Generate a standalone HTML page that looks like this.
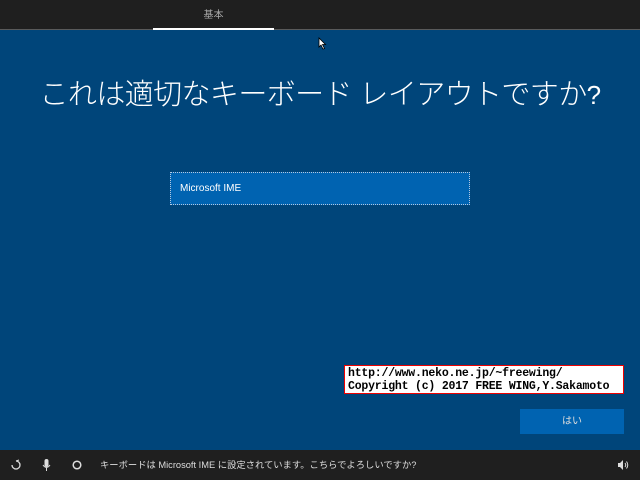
<!DOCTYPE html>
<html><head><meta charset="utf-8"><style>
body{margin:0;width:640px;height:480px;background:#00457a;position:relative;overflow:hidden;font-family:"Liberation Sans","Noto Sans CJK JP",sans-serif;color:#fff}
.top{position:absolute;left:0;top:0;width:640px;height:29px;background:#1f1f1f;border-bottom:1px solid #5a5a5a}
.tab{position:absolute;left:153px;top:0;width:121px;height:28px;border-bottom:2px solid #fff;text-align:center;font-size:10px;line-height:32px;color:#aaa}
h1{position:absolute;left:0;width:640px;top:75px;margin:0;text-align:center;font-weight:300;font-size:29px;line-height:40px;letter-spacing:-0.6px}
h1 span{font-weight:normal;font-family:"Liberation Sans",sans-serif;font-size:26px}
.box{position:absolute;left:170px;top:172px;width:298px;height:31px;background:#0063b1;border:1px dotted #b5c8e0;font-size:10px;line-height:31px;text-indent:9px}
.cp{position:absolute;left:344px;top:365px;width:276px;height:27px;background:#fff;border:1px solid #e00;color:#000;font-family:"Liberation Mono",monospace;font-size:11.5px;font-weight:bold;line-height:13px;padding-left:3px;padding-top:1px;box-sizing:border-box;height:29px;width:280px;white-space:nowrap;overflow:hidden;letter-spacing:-0.2px}
.btn{position:absolute;left:520px;top:409px;width:104px;height:25px;background:#0063b1;text-align:center;font-size:10px;line-height:26px;color:#ddd}
.bot{position:absolute;left:0;top:450px;width:640px;height:30px;background:#1f1f1f;font-size:9.3px;line-height:28px;color:#ddd}
</style></head><body>
<div class="top"><div class="tab">基本</div></div>
<svg style="position:absolute;left:318px;top:37px" width="9" height="13"><path d="M1 1 L1 10 L3 8 L5 12 L6.5 11.5 L4.5 7.5 L7.5 7.5 Z" fill="#fff" stroke="#000" stroke-width="0.8"/></svg>
<h1>これは適切なキーボード レイアウトですか<span>?</span></h1>
<div class="box">Microsoft IME</div>
<div class="cp">http://www.neko.ne.jp/~freewing/<br>Copyright (c) 2017 FREE WING,Y.Sakamoto</div>
<div class="btn">はい</div>
<div class="bot">
<svg style="position:absolute;left:10px;top:9px" width="12" height="12"><path d="M6 2 A4 4 0 1 1 2 6" fill="none" stroke="#ddd" stroke-width="1.3"/><path d="M6 2 L9 1" stroke="#ddd"/></svg>
<svg style="position:absolute;left:42px;top:8px" width="10" height="14"><rect x="2.5" y="1" width="4" height="8" rx="2" fill="#ddd"/><path d="M1 7 Q4.5 12 8 7 M4.5 10 V13" fill="none" stroke="#ddd"/></svg>
<svg style="position:absolute;left:72px;top:9px" width="12" height="12"><circle cx="5" cy="6" r="3.8" fill="none" stroke="#ddd" stroke-width="1.5"/></svg>
<span style="position:absolute;left:100px;top:1px">キーボードは Microsoft IME に設定されています。こちらでよろしいですか?</span>
<svg style="position:absolute;left:617px;top:9px" width="12" height="12"><path d="M1 4 H3 L6 1 V11 L3 8 H1 Z" fill="#ddd"/><path d="M8 4 Q9.5 6 8 8 M9.5 2.5 Q12 6 9.5 9.5" fill="none" stroke="#ddd"/></svg>
</div>
</body></html>
